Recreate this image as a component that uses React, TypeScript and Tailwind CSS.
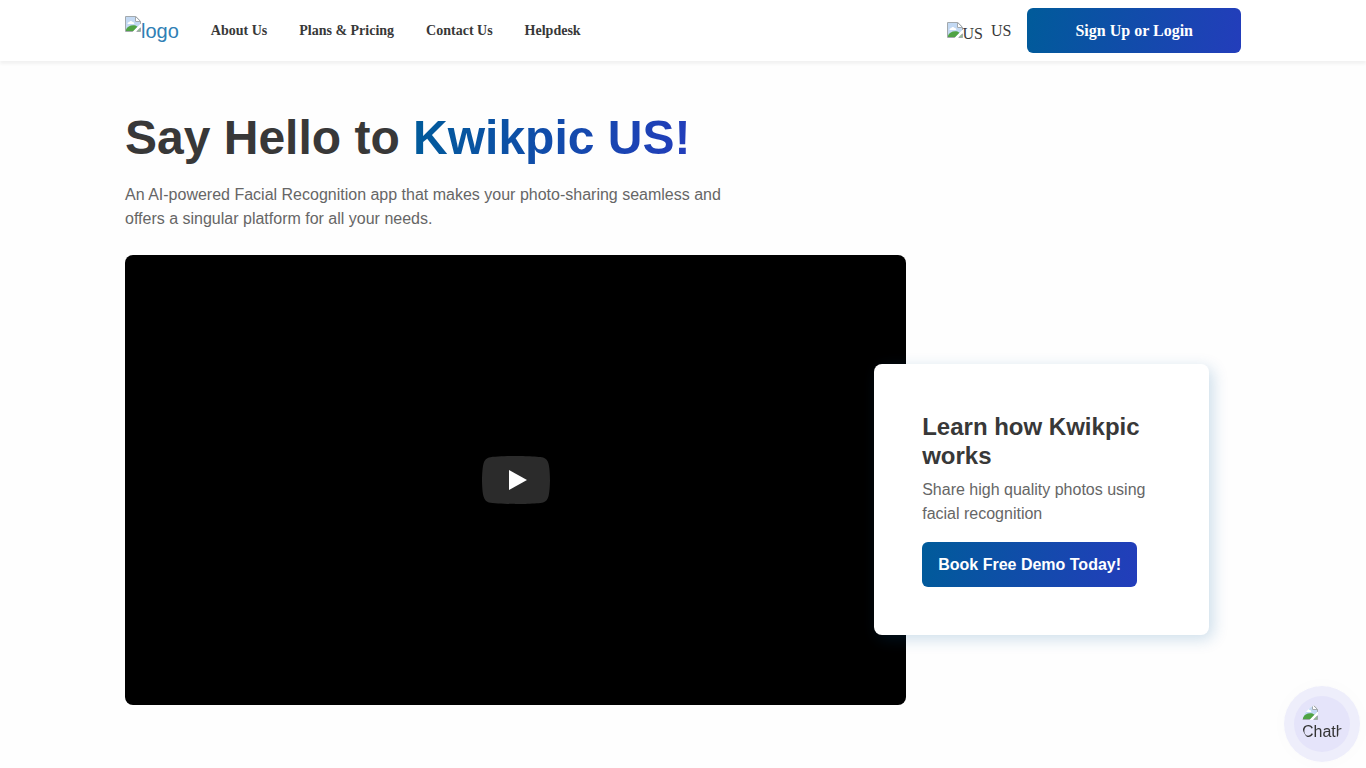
import React from "react";

const navLinks = ["About Us", "Plans & Pricing", "Contact Us", "Helpdesk"];

function MissingImage({ className = "" }: { className?: string }) {
  return (
    <svg viewBox="0 0 16 16" className={`h-4 w-4 shrink-0 ${className}`} aria-hidden="true">
      <path d="M0 0h11l5 5v4L9 16H0z" fill="#fff" />
      <path d="M1 1h9.500v5H15v2.500L8.500 15H1z" fill="#c3d9f3" />
      <path d="M2.500 8c0-1.300.900-2 1.900-1.900C4.800 4.700 7 4.600 7.600 6c1.100-.1 1.700.8 1.700 2z" fill="#fff" />
      <path d="M1 15v-1.500C2.500 10.500 6 8.500 10.500 9.500l2 1.200L8.500 15z" fill="#4fa344" />
      <path d="M.5 15.500V.5h10.300l4.700 4.700V8" fill="none" stroke="#a3a9ad" />
      <path d="M.5 15.500h8" fill="none" stroke="#a3a9ad" />
      <path d="M10.500.5v5h5z" fill="#fff" stroke="#a3a9ad" />
      <path d="M16 7.500 7.500 16h3.300L16 10.800z" fill="#fff" />
      <path d="M15.500 11.800v3.700h-3.700z" fill="#8dbf87" stroke="#a3a9ad" />
    </svg>
  );
}

function Header() {
  return (
    <header className="bg-white font-['Liberation_Serif',serif] shadow-[0_3px_3px_rgba(0,0,0,0.05)]">
      <div className="mx-auto flex max-w-[1140px] items-center px-3 py-2">
        <a
          href="#home"
          className="mr-8 flex items-start font-['Liberation_Sans',sans-serif] text-xl leading-[30px] text-[#2f80b5]"
        >
          <MissingImage />
          logo
        </a>
        <nav className="flex flex-1 gap-8 text-sm leading-6 font-bold text-[#383838]">
          {navLinks.map((label) => (
            <a key={label} href="#section">
              {label}
            </a>
          ))}
        </nav>
        <button type="button" className="mr-4 flex items-center gap-2 text-base leading-6 text-[#383838]">
          <span className="flex items-start pt-1.5">
            <MissingImage />
            US
          </span>
          <span>US</span>
        </button>
        <button
          type="button"
          className="rounded-md bg-[linear-gradient(100deg,#005b9a,#233dbb)] px-12 py-2.5 text-base leading-[25px] font-bold text-white"
        >
          Sign Up or Login
        </button>
      </div>
    </header>
  );
}

function Hero() {
  return (
    <main className="mx-auto max-w-[1140px] px-3 pt-12 pb-16">
      <h1 className="text-5xl leading-[58px] font-bold text-[#383838]">
        Say Hello to{" "}
        <span className="bg-[linear-gradient(100deg,#005b9a,#233dbb)] bg-clip-text text-transparent">
          Kwikpic US!
        </span>
      </h1>
      <p className="mt-4 mb-6 max-w-[614px] text-base leading-6 text-[#666]">
        An AI-powered Facial Recognition app that makes your photo-sharing seamless and offers a singular
        platform for all your needs.
      </p>
      <div className="flex items-start">
        <div className="flex h-[450px] w-[70%] items-center justify-center rounded-lg bg-black">
          <button type="button" aria-label="Play video">
            <svg viewBox="0 0 68 48" className="h-12 w-[68px]">
              <path
                d="M66.520 7.740c-.780-2.930-2.490-5.410-5.420-6.190C55.790.130 34 0 34 0S12.210.130 6.900 1.550c-2.930.780-4.630 3.260-5.420 6.190C.060 13.050 0 24 0 24s.060 10.950 1.480 16.260c.780 2.930 2.490 5.410 5.420 6.190C12.210 47.870 34 48 34 48s21.790-.130 27.100-1.550c2.930-.780 4.640-3.260 5.420-6.190C67.940 34.950 68 24 68 24s-.060-10.950-1.480-16.260z"
                fill="#2b2b2b"
              />
              <path d="M45 24 27 14v20" fill="#fff" />
            </svg>
          </button>
        </div>
        <section className="mt-[109px] -ml-8 w-[30%] rounded-lg bg-white p-12 shadow-[4px_4px_16px_rgba(0,91,154,0.2)]">
          <h2 className="text-2xl leading-[29px] font-bold text-[#383838]">Learn how Kwikpic works</h2>
          <p className="mt-2 mb-4 text-base leading-6 text-[#666]">
            Share high quality photos using facial recognition
          </p>
          <button
            type="button"
            className="rounded-md bg-[linear-gradient(100deg,#005b9a,#233dbb)] px-4 py-2.5 text-base leading-[25px] font-bold whitespace-nowrap text-white"
          >
            Book Free Demo Today!
          </button>
        </section>
      </div>
    </main>
  );
}

function ChatLauncher() {
  return (
    <button
      type="button"
      aria-label="Open chat"
      className="fixed right-1.5 bottom-1.5 flex h-[76px] w-[76px] items-center justify-center rounded-full bg-[#eeeefb] shadow-[0_0_20px_rgba(0,0,0,0.02)]"
    >
      <span className="flex h-14 w-14 items-center justify-center rounded-full bg-[#e5e4fa]">
        <span className="flex h-10 w-10 flex-col items-start overflow-hidden rounded-full text-base leading-6 text-[#333]">
          <MissingImage />
          Chathead
        </span>
      </span>
    </button>
  );
}

export default function App() {
  return (
    <div className="min-h-screen bg-[#fefefe] font-['Liberation_Sans',sans-serif]">
      <Header />
      <Hero />
      <ChatLauncher />
    </div>
  );
}
